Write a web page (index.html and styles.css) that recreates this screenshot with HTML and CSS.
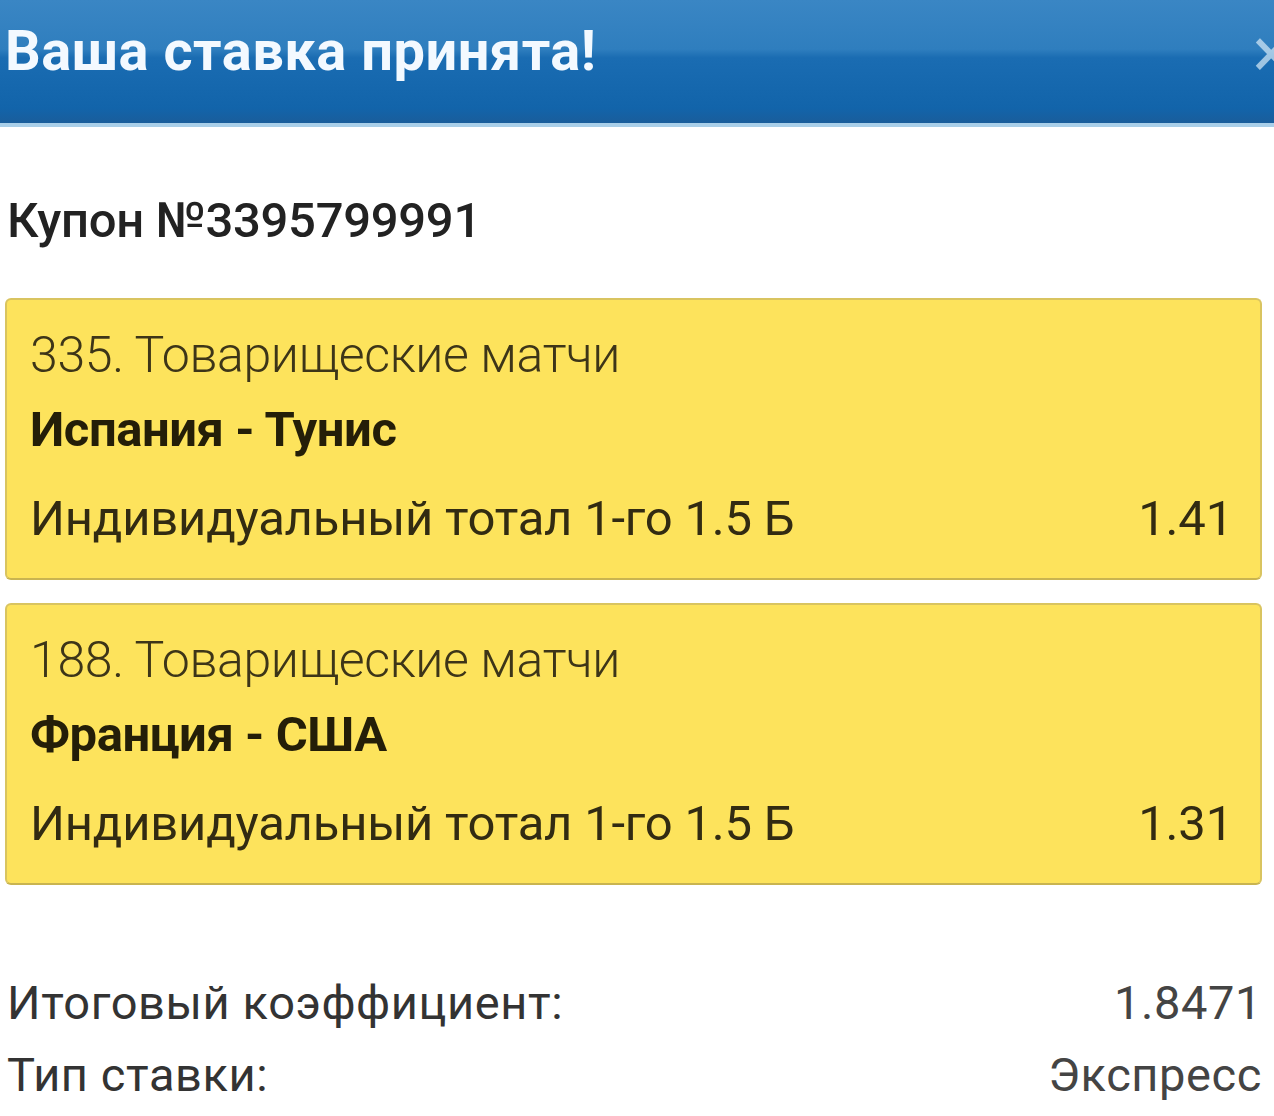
FILE: index.html
```html
<!DOCTYPE html>
<html lang="ru">
<head>
<meta charset="utf-8">
<title>Ваша ставка принята!</title>
<link rel="stylesheet" href="styles.css">
</head>
<body>
<div class="page">
  <header class="header">
    <h1 class="title">Ваша ставка принята!</h1>
    <span class="close">×</span>
  </header>
  <main class="content">
    <div class="coupon">Купон №3395799991</div>
    <div class="cards">
      <div class="card">
        <div class="league">335. Товарищеские матчи</div>
        <div class="match">Испания - Тунис</div>
        <div class="bet"><span>Индивидуальный тотал 1-го 1.5 Б</span><span>1.41</span></div>
      </div>
      <div class="card">
        <div class="league">188. Товарищеские матчи</div>
        <div class="match">Франция - США</div>
        <div class="bet"><span>Индивидуальный тотал 1-го 1.5 Б</span><span>1.31</span></div>
      </div>
    </div>
    <div class="summary">
      <div class="row"><span>Итоговый коэффициент:</span><span>1.8471</span></div>
      <div class="row"><span>Тип ставки:</span><span>Экспресс</span></div>
    </div>
  </main>
</div>
</body>
</html>
```
FILE: styles.css
```css
html, body {
  margin: 0;
  padding: 0;
  background: #ffffff;
}
body {
  font-family: Roboto, "Liberation Sans", sans-serif;
  width: 1274px;
  height: 1116px;
  overflow: hidden;
}
.page {
  display: flex;
  flex-direction: column;
}
.header {
  position: relative;
  box-sizing: content-box;
  height: 100px;
  padding: 23px 0 0 5px;
  background: linear-gradient(to bottom, #3a86c4 0%, #2f7ebe 40%, #1a6cb2 47%, #1264aa 88%, #1a5d9b 100%);
  border-bottom: 4px solid #a9cfe9;
  overflow: hidden;
}
.title {
  margin: 0;
  font-size: 56px;
  line-height: 56px;
  font-weight: 700;
  color: #f3f9ff;
  letter-spacing: 0.5px;
}
.close {
  position: absolute;
  right: -16px;
  top: 18px;
  font-size: 70px;
  line-height: 70px;
  color: #d8ebf8;
  opacity: 0.7;
}
.content {
  display: flex;
  flex-direction: column;
  padding: 69px 12px 0 5px;
}
.coupon {
  font-size: 49px;
  line-height: 49px;
  font-weight: 500;
  color: #222222;
  padding-left: 2px;
  letter-spacing: -0.3px;
}
.cards {
  display: flex;
  flex-direction: column;
  gap: 23px;
  margin-top: 53px;
}
.card {
  height: 282px;
  box-sizing: border-box;
  background: #fde35c;
  border: 2px solid #d9c460;
  border-bottom-color: #c9b450;
  border-radius: 6px;
  padding: 30px 27px 0 23px;
  display: flex;
  flex-direction: column;
}
.league {
  font-size: 50px;
  line-height: 50px;
  font-weight: 300;
  color: #3d3518;
  letter-spacing: -0.35px;
}
.match {
  margin-top: 25px;
  font-size: 49px;
  line-height: 49px;
  font-weight: 700;
  color: #241e08;
  letter-spacing: -0.45px;
}
.bet {
  margin-top: 40px;
  display: flex;
  justify-content: space-between;
  font-size: 49px;
  line-height: 49px;
  font-weight: 400;
  color: #322b12;
  letter-spacing: -0.2px;
}
.summary {
  display: flex;
  flex-direction: column;
  gap: 25px;
  margin-top: 94px;
  padding-left: 2px;
}
.row {
  display: flex;
  justify-content: space-between;
  font-size: 47px;
  line-height: 47px;
  font-weight: 400;
  color: #333333;
  letter-spacing: 0.6px;
}
.row span:last-child {
  color: #444444;
}
```
